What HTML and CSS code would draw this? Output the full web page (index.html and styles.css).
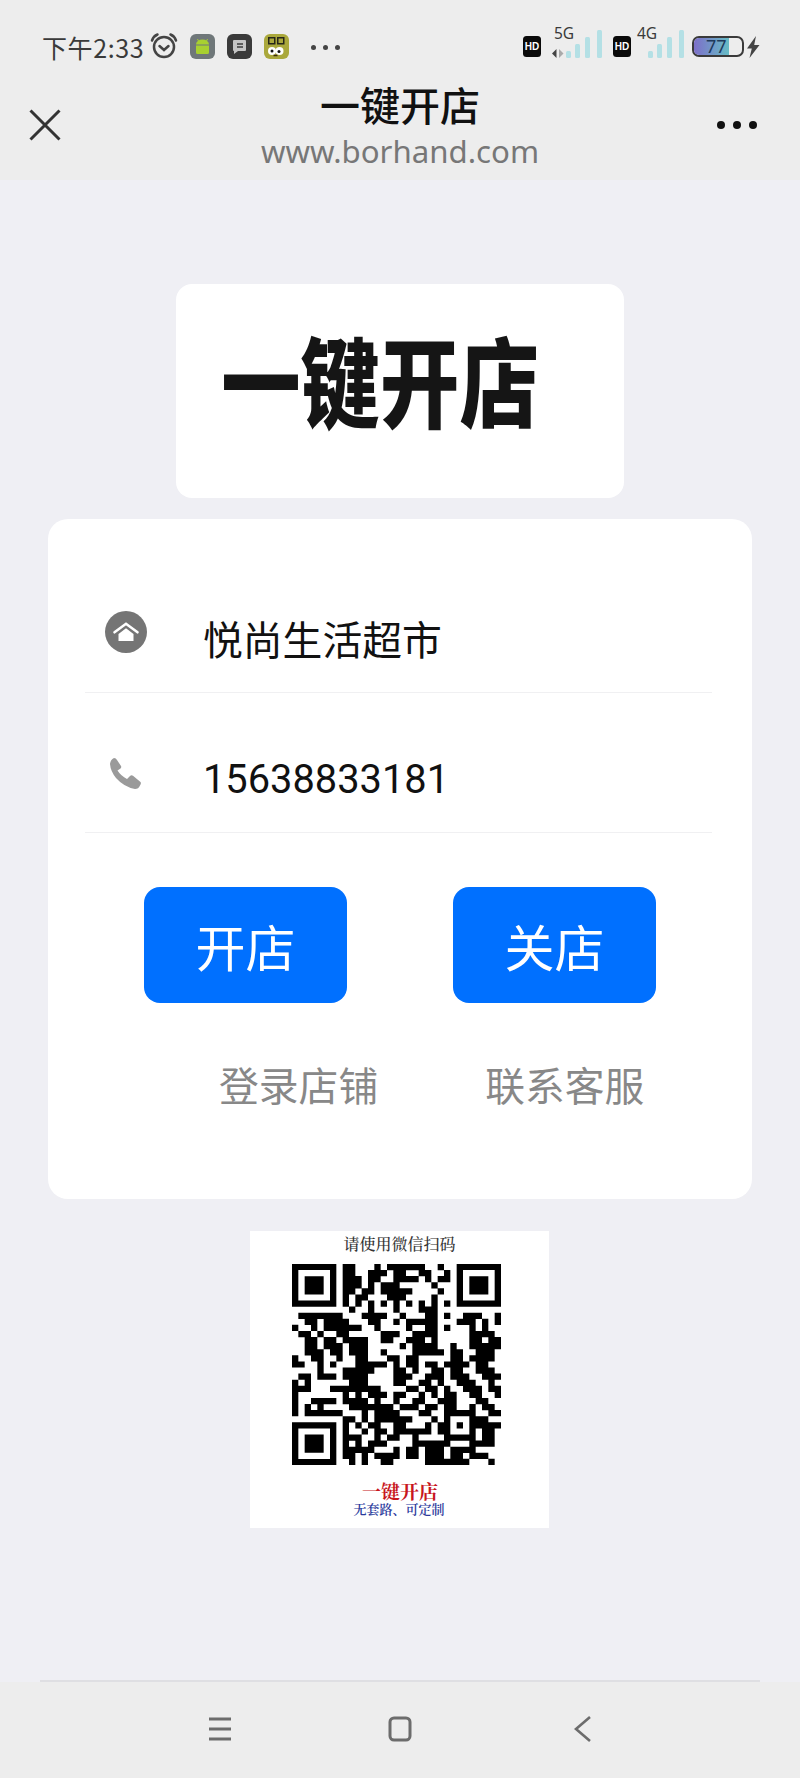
FILE: index.html
```html
<!DOCTYPE html>
<html lang="zh-CN">
<head>
<meta charset="utf-8">
<title>一键开店</title>
<link rel="stylesheet" href="styles.css">
</head>
<body>
<div class="page">
  <header class="top">
    <div class="status">
      <span class="time">下午2:33</span>
      <svg class="alarm" viewBox="0 0 28 28"><circle cx="14" cy="15" r="10" class="ln-dark"/><path d="M9.500 14l4.500 4 4.500-4" class="ln-dark"/><path d="M2 8.500C3 5.500 5 3.500 7.500 2.500M26 8.500C25 5.500 23 3.500 20.500 2.500" class="ln-dark"/></svg>
      <svg class="app" viewBox="0 0 25 25"><rect width="25" height="25" rx="6" fill="#6f7779"/><path d="M6 10.500a6.500 5 0 0 1 13 0zM6 11.500h13v7a1.500 1.500 0 0 1-1.500 1.500h-10A1.500 1.500 0 0 1 6 18.500z" fill="#a8d030"/><path d="M8.500 7l-1-2M16.500 7l1-2" stroke="#a8d030" fill="none"/></svg>
      <svg class="app" viewBox="0 0 25 25"><rect width="25" height="25" rx="6" fill="#3a3a3a"/><path d="M7 6h11a1 1 0 0 1 1 1v9a1 1 0 0 1-1 1h-7l-4 3v-3a1 1 0 0 1-1-1V7a1 1 0 0 1 1-1z" fill="#c4c4c4"/><path d="M10 10h6M10 13h6" stroke="#3a3a3a" stroke-width="1.300"/></svg>
      <svg class="app" viewBox="0 0 25 25"><rect width="25" height="25" rx="6" fill="#aaa83c"/><rect x="4" y="3" width="7.500" height="7.500" fill="#26261a"/><rect x="13" y="3" width="7.500" height="7.500" fill="#26261a"/><rect x="5.500" y="4.500" width="4.500" height="4.500" fill="#aaa83c"/><rect x="14.500" y="4.500" width="4.500" height="4.500" fill="#aaa83c"/><circle cx="8" cy="17" r="4" fill="#fff"/><circle cx="15.500" cy="17" r="4" fill="#fff"/><circle cx="8" cy="17" r="1.500" fill="#111"/><circle cx="15" cy="17.500" r="1.500" fill="#111"/><path d="M9.500 21.500h4" stroke="#3a2a10" stroke-width="1.500"/></svg>
      <span class="more-dots"><i></i><i></i><i></i></span>
      <span class="status-right">
        <span class="hd">HD</span>
        <span class="net net-5g">
          <span class="net-label">5G</span>
          <svg class="arrows" viewBox="0 0 12 8" preserveAspectRatio="none"><path d="M4.500 0v8L0 4z" fill="#444"/><path d="M7 8V0l4.500 4z" fill="#aaa"/></svg>
          <svg class="bars" viewBox="0 0 40 29"><rect x="0" y="22" width="5" height="7" rx="1.500"/><rect x="9" y="15" width="5" height="14" rx="1.500"/><rect x="19" y="8" width="5" height="21" rx="1.500"/><rect x="31" y="1" width="5" height="28" rx="1.500"/></svg>
        </span>
        <span class="hd">HD</span>
        <span class="net net-4g">
          <span class="net-label">4G</span>
          <svg class="bars" viewBox="0 0 40 29"><rect x="0" y="22" width="5" height="7" rx="1.500"/><rect x="9" y="15" width="5" height="14" rx="1.500"/><rect x="19" y="8" width="5" height="21" rx="1.500"/><rect x="31" y="1" width="5" height="28" rx="1.500"/></svg>
        </span>
        <span class="battery"><span class="battery-fill"></span><span class="battery-num">77</span></span>
        <svg class="bolt" viewBox="0 0 14 22"><path d="M10 0L1 12.500h4.800L3.500 22 13.500 9H8.200z" fill="#444"/></svg>
      </span>
    </div>
    <div class="navbar">
      <svg class="close" viewBox="0 0 32 32"><path d="M1.500 1.500l29 29M30.500 1.500l-29 29"/></svg>
      <div class="heading">
        <div class="title">一键开店</div>
        <div class="url">www.borhand.com</div>
      </div>
      <span class="menu-dots"><i></i><i></i><i></i></span>
    </div>
  </header>

  <main class="content">
    <div class="logo-card"><span class="logo-text">一键开店</span></div>

    <section class="card">
      <div class="row row-name">
        <svg class="ico-home" viewBox="0 0 42 42"><circle cx="21" cy="21" r="21" fill="#757575"/><path d="M9.500 21.300L21 12.800l11.500 8.500" fill="none" stroke="#fff" stroke-width="2.600" stroke-linecap="round"/><path d="M13.500 23L21 17.300 28.500 23v7h-15z" fill="#fff"/></svg>
        <div class="row-text row-text-name">悦尚生活超市</div>
      </div>
      <div class="row row-phone">
        <svg class="ico-phone" viewBox="0 0 32 32"><path d="M5 1Q7 1 8 3L12 9Q12.700 10.500 11.500 11.500L8.500 13.500Q12 19 18 22L21 19Q22.500 17.800 24 18.800L31.500 25Q32.500 26.500 31 28.500Q29.500 32 26 32Q15 30 7 21Q1.500 14 1 7Q1.500 2.500 5 1z" fill="#9a9a9a"/></svg>
        <div class="row-text row-text-phone">15638833181</div>
      </div>
      <div class="buttons">
        <button class="btn">开店</button>
        <button class="btn">关店</button>
      </div>
      <div class="links">
        <span>登录店铺</span>
        <span>联系客服</span>
      </div>
    </section>

    <section class="qr-block">
      <div class="qr-title">请使用微信扫码</div>
      <svg class="qr" viewBox="0 0 33 33" preserveAspectRatio="none">
        <path class="qr-finder" d="M0 0h7v7H0zM1 1v5h5V1zM2 2h3v3H2zM26 0h7v7h-7zM27 1v5h5V1zM28 2h3v3h-3zM0 26h7v7H0zM1 27v5h5v-5zM2 28h3v3H2z"/>
        <path class="qr-mods" d="M8 .5h2M13 .5h1M15 .5h6M23 .5h1
M8 1.500h2M12 1.500h3M16 1.500h2M20 1.500h2M24 1.500h1
M8 2.500h3M12 2.500h2M16 2.500h4M21 2.500h1M23 2.500h2
M8 3.500h3M12 3.500h1M14 3.500h3M22 3.500h1
M8 4.500h2M11 4.500h2M14 4.500h5M23 4.500h1
M8 5.500h1M10 5.500h2M15 5.500h3M22 5.500h1
M8 6.500h1M10 6.500h1M12 6.500h1M14 6.500h1M16 6.500h1M18 6.500h1M20 6.500h1M22 6.500h1M24 6.500h1
M9 7.500h1M12 7.500h1M16 7.500h1M20 7.500h3
M1 8.500h7M11 8.500h4M17 8.500h1M21 8.500h2M24 8.500h1M27 8.500h3M32 8.500h1
M2 9.500h2M5 9.500h4M12 9.500h2M16 9.500h1M18 9.500h5M26 9.500h3M30 9.500h1M32 9.500h1
M0 10.500h1M3 10.500h1M5 10.500h2M7 10.500h4M13 10.500h1M18 10.500h1M21 10.500h2M24 10.500h1M28 10.500h1M30 10.500h1
M1 11.500h2M4 11.500h1M7 11.500h2M14 11.500h3M19 11.500h4M28 11.500h4
M2 12.500h2M5 12.500h2M8 12.500h4M14 12.500h2M18 12.500h3M22 12.500h1M28 12.500h2M31 12.500h2
M2 13.500h2M5 13.500h3M9 13.500h3M17 13.500h1M19 13.500h4M25 13.500h1M28 13.500h5
M2 14.500h3M6 14.500h2M9 14.500h3M14 14.500h1M19 14.500h5M25 14.500h2M29 14.500h3
M0 15.500h1M3 15.500h2M7 15.500h1M10 15.500h2M15 15.500h2M18 15.500h2M25 15.500h2M28 15.500h4
M0 16.500h2M4 16.500h1M6 16.500h1M10 16.500h5M16 16.500h1M18 16.500h2M21 16.500h2M24 16.500h4M29 16.500h2
M4 17.500h1M8 17.500h5M16 17.500h2M19 17.500h1M22 17.500h2M25 17.500h2M29 17.500h3
M1 18.500h2M4 18.500h3M8 18.500h4M16 18.500h3M21 18.500h3M25 18.500h3M30 18.500h3
M0 19.500h1M2 19.500h1M9 19.500h3M16 19.500h2M20 19.500h2M23 19.500h1M26 19.500h3M31 19.500h1
M0 20.500h3M6 20.500h8M18 20.500h2M21 20.500h2M24 20.500h1M27 20.500h3M31 20.500h2
M0 21.500h1M8 21.500h1M10 21.500h1M12 21.500h3M16 21.500h2M20 21.500h1M22 21.500h1M24 21.500h2M28 21.500h2M32 21.500h1
M0 22.500h1M3 22.500h4M8 22.500h4M13 22.500h1M16 22.500h1M19 22.500h2M23 22.500h3M29 22.500h2
M0 23.500h1M2 23.500h1M4 23.500h1M9 23.500h7M17 23.500h3M21 23.500h2M24 23.500h2M28 23.500h1M30 23.500h2
M0 24.500h1M2 24.500h6M11 24.500h1M13 24.500h4M20 24.500h2M24 24.500h5M31 24.500h2
M8 25.500h2M11 25.500h1M13 25.500h6M22 25.500h1M24 25.500h1M28 25.500h3
M8 26.500h1M10 26.500h1M12 26.500h2M16 26.500h2M21 26.500h1M23 26.500h2M26 26.500h1M28 26.500h5
M8 27.500h1M11 27.500h1M13 27.500h2M16 27.500h6M23 27.500h2M28 27.500h1M30 27.500h2
M8 28.500h3M13 28.500h1M15 28.500h2M19 28.500h1M24 28.500h5M30 28.500h2
M8 29.500h1M10 29.500h1M12 29.500h3M19 29.500h4M23 29.500h2M28 29.500h4
M8 30.500h5M16 30.500h1M18 30.500h2M21 30.500h3M25 30.500h4
M8 31.500h2M11 31.500h1M13 31.500h4M18 31.500h2M21 31.500h3M25 31.500h2M28 31.500h3
M9 32.500h1M11 32.500h1M14 32.500h2M21 32.500h7M31 32.500h1"/>
      </svg>
      <div class="qr-brand">一键开店</div>
      <div class="qr-sub">无套路、可定制</div>
    </section>
  </main>

  <div class="rule"></div>
  <nav class="softkeys">
    <svg class="key" viewBox="0 0 30 30"><path d="M4 5h22M4 15h22M4 25h22"/></svg>
    <svg class="key" viewBox="0 0 30 30"><rect x="5" y="4" width="20" height="22" rx="4"/></svg>
    <svg class="key key-back" viewBox="0 0 30 30"><path d="M25 3L11 15l14 12"/></svg>
  </nav>
</div>
</body>
</html>
```
FILE: styles.css
```css
* { box-sizing: border-box; }
html, body { margin: 0; padding: 0; }
body { font-family: "Noto Sans CJK SC", "Noto Sans", sans-serif; }
.page {
  width: 800px;
  height: 1778px;
  background: #efeff4;
  display: flex;
  flex-direction: column;
  overflow: hidden;
}

/* top chrome */
.top { height: 180px; background: #ededed; flex: none; }
.status {
  height: 70px;
  padding: 14px 40px 0 42px;
  display: flex;
  align-items: flex-start;
}
.time {
  margin-top: 14px;
  font-size: 25px;
  line-height: 38px;
  color: #3a3a3a;
  letter-spacing: .6px;
  white-space: nowrap;
}
.alarm { width: 28px; height: 28px; margin: 18px 0 0 6px; flex: none; }
.ln-dark { fill: none; stroke: #444; stroke-width: 2.500; stroke-linecap: round; }
.app { width: 25px; height: 25px; margin: 20px 0 0 12px; flex: none; }
.more-dots { display: flex; gap: 7px; margin: 31px 0 0 22px; }
.more-dots i { width: 5px; height: 5px; border-radius: 50%; background: #444; }
.status-right {
  margin-left: auto;
  display: flex;
  align-items: flex-start;
}
.hd {
  flex: none;
  width: 18px;
  height: 21px;
  margin-top: 22px;
  background: #0a0a0a;
  color: #fff;
  border-radius: 3.500px;
  font: 700 10px/21px "Liberation Sans", sans-serif;
  text-align: center;
}
.net { position: relative; width: 72px; height: 50px; display: block; flex: none; }
.net-label {
  position: absolute;
  left: 13px;
  top: 9px;
  font: 400 15.500px/20px "Noto Sans", sans-serif;
  color: #3a3a3a;
}
.net-4g { width: 61px; }
.net-4g .net-label { left: 6px; }
.arrows { position: absolute; left: 11px; top: 35px; width: 12px; height: 9px; }
.bars { position: absolute; top: 15px; width: 40px; height: 29px; fill: #b4e0e5; }
.net-5g .bars { left: 25px; }
.net-4g .bars { left: 17px; }
.battery {
  position: relative;
  flex: none;
  width: 52px;
  height: 21px;
  margin-top: 22px;
  border: 2px solid #3a3a3a;
  border-radius: 7px;
  background: #ededed;
}
.battery-fill {
  position: absolute;
  inset: 0 13px 0 0;
  border-radius: 5px 0 0 5px;
  background: linear-gradient(90deg, #7d6fc9, #67bcc6);
}
.battery-num {
  position: absolute;
  left: 12px;
  top: -4px;
  font: 400 18px/25px "Noto Sans", sans-serif;
  color: #203a5a;
}
.bolt { width: 14px; height: 22px; margin: 22px 0 0 2px; flex: none; }

.navbar {
  height: 110px;
  display: grid;
  grid-template-columns: 1fr auto 1fr;
  align-items: center;
  padding: 0 38px;
}
.close { width: 32px; height: 32px; margin-left: -9px; }
.close path { fill: none; stroke: #333; stroke-width: 3; }
.heading { text-align: center; padding-top: 10px; height: 110px; }
.title { font-size: 40px; line-height: 48px; font-weight: 500; color: #111; }
.url { font-size: 31.200px; line-height: 46px; color: #777; font-family: "Noto Sans", sans-serif; }
.menu-dots { display: flex; gap: 8px; justify-content: flex-end; margin-right: 5px; }
.menu-dots i { width: 8px; height: 8px; border-radius: 50%; background: #111; }

/* content */
.content { flex: 1; padding-top: 104px; display: flex; flex-direction: column; align-items: center; }
.logo-card {
  width: 448px;
  height: 214px;
  background: #fff;
  border-radius: 16px;
  display: flex;
  align-items: center;
  justify-content: center;
  padding: 0 40px 28px 0;
}
.logo-text {
  font-size: 98px;
  line-height: 100px;
  font-weight: 900;
  color: #151515;
  white-space: nowrap;
  transform: scaleX(.81);
}
.card {
  width: 704px;
  height: 680px;
  margin-top: 21px;
  background: #fff;
  border-radius: 20px;
  padding: 0 40px 0 37px;
}
.row { display: flex; align-items: flex-start; border-bottom: 1px solid #f0f0f2; }
.row-name { height: 174px; padding-top: 92px; }
.row-phone { height: 140px; padding-top: 62px; }
.ico-home { width: 42px; height: 42px; margin-left: 20px; flex: none; }
.ico-phone { width: 32px; height: 32px; margin: 2px 4px 0 24px; flex: none; }
.row-text { font-size: 39.800px; line-height: 50px; color: #111; margin-left: 56px; }
.row-text-name { margin-top: 2px; }
.row-text-phone { font-family: Roboto, sans-serif; margin-left: 58px; }
.buttons { display: flex; justify-content: center; gap: 106px; margin: 54px -40px 0 -37px; }
.btn {
  width: 203px;
  height: 116px;
  border: 0;
  padding: 0;
  background: #0070ff;
  border-radius: 16px;
  color: #fff;
  font: 400 50px/116px "Noto Sans CJK SC", sans-serif;
}
.links {
  display: flex;
  gap: 107px;
  margin: 56px 0 0 134px;
  font-size: 39.800px;
  line-height: 50px;
  color: #888;
}

/* QR */
.qr-block {
  width: 299px;
  height: 297px;
  margin: 32px 0 0 -1px;
  padding-top: 1px;
  background: #fff;
  display: flex;
  flex-direction: column;
  align-items: center;
  font-family: "Noto Serif CJK SC", "Noto Sans CJK SC", serif;
}
.qr-title { font-size: 16px; line-height: 24px; color: #333; font-weight: 500; }
.qr { width: 209px; height: 201px; margin-top: 8px; margin-left: -6px; flex: none; }
.qr-finder { fill: #000; fill-rule: evenodd; }
.qr-mods { fill: none; stroke: #000; stroke-width: 1.020; }
.qr-brand { font-size: 19px; line-height: 22px; margin-top: 15px; margin-left: 1px; font-weight: 700; color: #c8161d; }
.qr-sub { font-size: 13px; line-height: 14px; font-weight: 600; color: #2b3a9c; margin-left: -1px; }

/* soft keys */
.rule { height: 2px; margin: 0 40px; background: #dfdfe3; flex: none; }
.softkeys {
  height: 96px;
  flex: none;
  background: #ededed;
  display: flex;
  align-items: center;
  gap: 150px;
  padding: 0 0 2px 205px;
}
.key { width: 30px; height: 30px; flex: none; fill: none; stroke: #6c6c6c; stroke-width: 3; }
.key-back { stroke-width: 2.600; }
```
